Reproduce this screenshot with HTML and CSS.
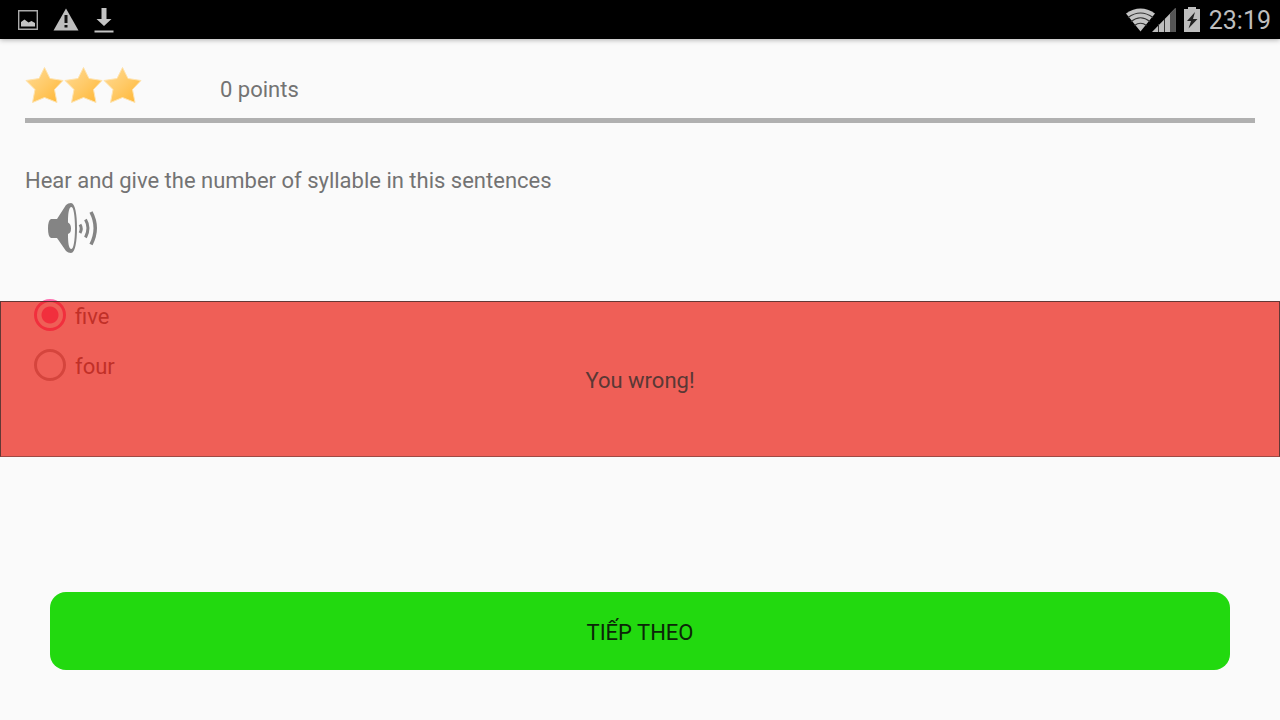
FILE: index.html
```html
<!DOCTYPE html>
<html lang="en">
<head>
<meta charset="utf-8">
<meta name="viewport" content="width=device-width, initial-scale=1">
<title>Syllable quiz</title>
<link rel="stylesheet" href="styles.css">
</head>
<body>
<header class="status">
  <div class="status-group notices">
    <svg width="20" height="20" viewBox="0 0 20 20" aria-hidden="true"><path d="M.7.7h18.6v18.6H.7z" fill="none" stroke="#aaa" stroke-width="1.4"/><path d="M3 16.500V12l3.500-2.500 4 3 3-1.500 3.500 2v3.500z" fill="#c4c4c4"/></svg>
    <svg width="26" height="23" viewBox="0 0 26 23" aria-hidden="true"><path d="M13 .5 25.500 22.500H.5z" fill="#bebebe"/><path d="M11.500 7h3v8h-3zM11.500 17h3v2.500h-3z" fill="#111"/></svg>
    <svg width="20" height="26" viewBox="0 0 20 26" aria-hidden="true"><path d="M7.500 1h5v11H17.500l-7.500 7-7.500-7h5zM.5 23.500h19v2H.5z" fill="#c4c4c4"/></svg>
  </div>
  <div class="status-group">
    <svg width="52" height="26" viewBox="0 0 52 26" aria-hidden="true"><path d="M1 6.500Q15.500-3.500 30 6.500L15.500 24.500z" fill="#c4c4c4"/><path d="M3 10.500Q15.500 1.500 28 10.500M6 14.500Q15.500 7 25 14.500M9.500 18.500Q15.500 14 21.500 18.500" fill="none" stroke="#333" stroke-width="1.200"/><path d="M27 25 50.500 1v24z" fill="#bebebe"/><path d="M45 6.600 50.500 1v24H45z" fill="#555"/><path d="M33.500 17v8M39.500 12v13" stroke="#333" stroke-width="1"/></svg>
    <svg class="battery" width="16" height="25" viewBox="0 0 16 25" aria-hidden="true"><path d="M0 2h4V0h8v2h4v23H0z" fill="#bebebe"/><path d="M11 5 3 14h4L4.500 21.500 13.500 12H9z" fill="#222"/></svg>
    <time class="clock">23:19</time>
  </div>
</header>
<main class="quiz">
  <div class="score">
    <svg class="stars" width="118" height="38" viewBox="0 0 118 38" role="img" aria-label="3 stars">
      <defs>
        <linearGradient id="gold" x1="0" y1="0" x2="1" y2="1"><stop offset="0" stop-color="#ffdb96"/><stop offset=".5" stop-color="#ffca68"/><stop offset="1" stop-color="#ffb530"/></linearGradient>
        <path id="star" d="M19.500 1.500 25 12.500 38 14.500 29.500 23.500 32 36.500 19.500 31.500 7.500 36.500 10 23.500 1 14.500 14 12.500z" fill="url(#gold)" stroke="#ffe3ae" stroke-width="1" stroke-linejoin="round"/>
      </defs>
      <use href="#star"/><use href="#star" x="39"/><use href="#star" x="78"/>
    </svg>
    <span class="points">0 points</span>
  </div>
  <p class="question">Hear and give the number of syllable in this sentences</p>
  <button class="listen" type="button" aria-label="Listen">
    <svg width="50" height="50" viewBox="0 0 50 50" aria-hidden="true"><path fill="#848484" fill-rule="evenodd" d="M3 16H9L18 2Q20 0 23 0C27 0 29 11 29 25S27 50 23 50Q20 50 18 48L9 35H3Q0 34 0 25.500T3 16zM23.500 4C20.500 4 20 12 20 19.500Q23 21 23 25.500T20 31C20 39 20.500 46 23.500 46 25.500 46 27 37 27 25S25.500 4 23.500 4z"/><g fill="none" stroke="#848484"><path d="M32 21.500Q34.500 25.500 32 30" stroke-width="3"/><path d="M37.500 16.500Q42.500 25 37.500 34.500" stroke-width="3"/><path d="M43 9Q51.500 25 43 41.500" stroke-width="3.500"/></g></svg>
  </button>
  <form class="answers">
    <label class="answer"><input class="radio" type="radio" name="count" checked><span class="answer-text">five</span></label>
    <label class="answer"><input class="radio" type="radio" name="count"><span class="answer-text">four</span></label>
  </form>
  <button class="next" type="button">TIẾP THEO</button>
</main>
<div class="result" role="alert">You wrong!</div>
</body>
</html>
```
FILE: styles.css
```css
* {
  box-sizing: border-box;
}

body {
  margin: 0;
  min-height: 100vh;
  display: flex;
  flex-direction: column;
  background: #fafafa;
  color: #737373;
  font: 22px/30px Roboto, sans-serif;
}

.status {
  display: flex;
  justify-content: space-between;
  align-items: center;
  height: 39px;
  padding: 0 9px 0 18px;
  background: #000;
  box-shadow: 0 1px 5px rgba(0, 0, 0, .3);
}

.status-group {
  display: flex;
  align-items: center;
}

.notices {
  gap: 15px;
}

.battery {
  margin: 0 9px 0 7px;
}

.clock {
  padding-top: 2px;
  color: #bebebe;
  font-size: 25px;
}

.quiz {
  flex: 1;
  display: flex;
  flex-direction: column;
  padding: 26px 25px 50px;
}

.score {
  display: flex;
  align-items: center;
  height: 58px;
  padding-bottom: 14px;
  border-bottom: 5px solid #b0b0b0;
}

.points {
  margin: 10px 0 0 77px;
}

.question {
  margin: 43px 0 0;
}

.listen {
  align-self: flex-start;
  margin: 7px 0 0 23px;
  padding: 0;
  border: 0;
  background: none;
}

.listen svg {
  display: block;
}

.answers {
  display: flex;
  flex-direction: column;
  align-items: flex-start;
  margin-top: 37px;
  padding-left: 9px;
}

.answer {
  display: flex;
  align-items: center;
  gap: 9px;
  height: 50px;
}

.answer-text {
  padding-top: 4px;
}

.radio {
  appearance: none;
  width: 32px;
  height: 32px;
  margin: 0;
  border: 3px solid #b0b0b0;
  border-radius: 50%;
}

.radio:checked {
  border-color: #ff70b0;
  background: radial-gradient(circle, #ff70b0 8px, transparent 9px);
}

.next {
  height: 78px;
  margin: auto 25px 0;
  padding: 4px 0 0;
  border: 0;
  border-radius: 16px;
  background: #22d90f;
  color: #0b2608;
  font: inherit;
}

.result {
  position: absolute;
  top: 301px;
  left: 0;
  right: 0;
  padding: 64px 0 60px;
  border: 1px solid rgba(40, 40, 40, .7);
  border-bottom-color: rgba(40, 40, 40, .4);
  background: rgba(233, 12, 0, .65);
  color: #5a3835;
  text-align: center;
}
```
